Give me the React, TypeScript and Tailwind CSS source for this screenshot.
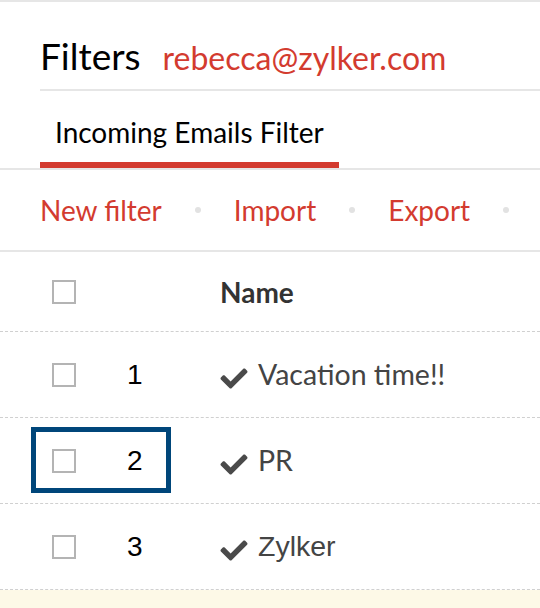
import React from "react";
import { FaCheck } from "react-icons/fa";

const rows = [
  { n: "1", name: "Vacation time!!", font: "font-['Lato',sans-serif]" },
  { n: "2", name: "PR", font: "font-['Lato',sans-serif]", focused: true },
  { n: "3", name: "Zylker", font: "font-['Liberation_Sans',Arial,sans-serif]" },
];

function Box() {
  return <div className="h-[24px] w-[24px] border-2 border-[#b4b4b4] bg-white" />;
}

function Dot() {
  return <span className="mx-[33px] h-[6px] w-[6px] shrink-0 rounded-full bg-[#e2e2e2]" />;
}

export default function App() {
  return (
    <div className="min-h-[608px] w-[540px] overflow-hidden border-t-2 border-[#e6e6e6] bg-white font-['Lato',sans-serif]">
      {/* Header */}
      <div className="pl-10">
        <div className="flex h-[89px] items-end gap-[22px] border-b-2 border-[#e6e6e6] pb-[15px] leading-none">
          <span className="text-[37px] text-black">Filters</span>
          <span className="text-[32px] text-[#d33b2f]">rebecca@zylker.com</span>
        </div>
        <div className="flex">
          <div className="border-b-[6px] border-[#d33b2f] px-[15px] pb-[16px] pt-[27px] text-[28px] leading-none text-black">
            Incoming Emails Filter
          </div>
        </div>
      </div>
      <div className="h-[2px] bg-[#e6e6e6]" />

      {/* Actions */}
      <div className="flex h-[82px] items-center whitespace-nowrap border-b-2 border-[#e6e6e6] pl-10 text-[28px] leading-none text-[#d33b2f]">
        <span className="shrink-0">New filter</span>
        <Dot />
        <span className="shrink-0">Import</span>
        <Dot />
        <span className="shrink-0">Export</span>
        <Dot />
      </div>

      {/* Table header */}
      <div className="flex h-[80px] items-center border-b border-dashed border-[#d0d0d0]">
        <div className="w-[126px] pl-[52px]">
          <Box />
        </div>
        <div className="w-[94px]" />
        <span className="text-[28px] font-bold leading-none text-[#333333]">Name</span>
      </div>

      {rows.map((r) => (
        <div
          key={r.n}
          className="relative flex h-[86px] items-center border-b border-dashed border-[#d0d0d0]"
        >
          <div className="w-[126px] pl-[52px]">
            <Box />
          </div>
          <div className="w-[94px] pl-[1px] font-['Liberation_Sans',Arial,sans-serif] text-[28px] leading-none text-black">
            {r.n}
          </div>
          <FaCheck className="mr-[10px] h-[27px] w-[28px] translate-y-[4px] text-[#4a4a4a]" />
          <span className={`${r.font} text-[28.5px] leading-none text-[#444444]`}>{r.name}</span>
          {r.focused && (
            <div className="absolute left-[31px] top-[9px] h-[66px] w-[140px] border-[5px] border-[#00467a]" />
          )}
        </div>
      ))}

      <div className="h-[20px] bg-[#fdf9e7]" />
    </div>
  );
}
